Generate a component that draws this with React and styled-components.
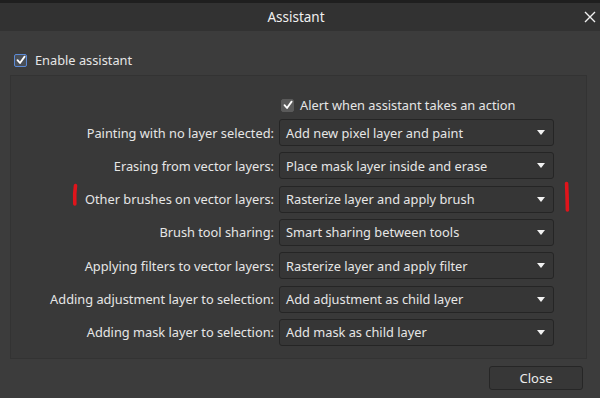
import React from 'react';
import styled, { createGlobalStyle } from 'styled-components';

const GlobalStyle = createGlobalStyle`
	html, body {
		margin: 0;
		padding: 0;
		background: #3c3c3c;
	}
	* {
		box-sizing: border-box;
	}
`;

const Window = styled.div`
	position: relative;
	width: 600px;
	height: 398px;
	background: #3c3c3c;
	display: flex;
	flex-direction: column;
	font-family: "Noto Sans", "Open Sans", sans-serif;
	font-size: 12.8px;
	color: #e6e6e6;
	overflow: hidden;
`;

const TitleBar = styled.div`
	height: 31px;
	border-top: 3px solid #1f1f1f;
	background: #323232;
	display: flex;
	align-items: center;
	justify-content: center;
	position: relative;
	padding-right: 8px;
	font-size: 13.5px;
	color: #f0f0f0;
`;

const CloseX = styled.button`
	position: absolute;
	right: 3px;
	top: 7px;
	width: 14px;
	height: 14px;
	padding: 0;
	border: none;
	background: none;
	display: flex;
	align-items: center;
	justify-content: center;
`;

const Body = styled.div`
	flex: 1;
	display: flex;
	flex-direction: column;
	padding: 22px 13px 0 10px;
`;

const CheckRow = styled.label`
	display: flex;
	align-items: center;
	gap: ${p => p.$gap || 6}px;
	height: 14px;
	margin-left: ${p => p.$indent || 0}px;
`;

const Box = styled.span`
	width: 13px;
	height: 13px;
	border-radius: 2px;
	background: ${p => (p.$focus ? '#4a4f57' : '#5a5a5a')};
	border: 1px solid ${p => (p.$focus ? '#5b8ad6' : '#5a5a5a')};
	display: flex;
	align-items: center;
	justify-content: center;
`;

const Panel = styled.div`
	margin-top: 8px;
	height: 284px;
	background: #393939;
	border: 1px solid #333333;
	padding-top: 22px;
	display: flex;
	flex-direction: column;
`;

const Grid = styled.div`
	display: grid;
	grid-template-columns: 263px 275px;
	column-gap: 5px;
	row-gap: 6.33px;
	margin-top: 7px;
`;

const Label = styled.div`
	text-align: right;
	align-self: center;
	white-space: nowrap;
`;

const Select = styled.div`
	height: 27px;
	border: 1px solid #252525;
	border-radius: 3px;
	background: #363636;
	display: flex;
	align-items: center;
	justify-content: space-between;
	padding: 0 6px 0 6px;
	white-space: nowrap;
`;

const Arrow = styled.span`
	width: 0;
	height: 0;
	border-left: 4.5px solid transparent;
	border-right: 4.5px solid transparent;
	border-top: 5px solid #f2f2f2;
	margin-right: 2px;
`;

const Footer = styled.div`
	display: flex;
	justify-content: flex-end;
	padding: 7px 4px 0 0;
`;

const Button = styled.button`
	width: 94px;
	height: 24px;
	background: #373737;
	border: 1px solid #262626;
	border-radius: 3px;
	color: #ececec;
	font-family: inherit;
	font-size: 13px;
	padding: 0;
`;

const Mark = styled.svg`
	position: absolute;
	left: ${p => p.$x}px;
	top: ${p => p.$y}px;
`;

const rows = [
	['Painting with no layer selected:', 'Add new pixel layer and paint'],
	['Erasing from vector layers:', 'Place mask layer inside and erase'],
	['Other brushes on vector layers:', 'Rasterize layer and apply brush'],
	['Brush tool sharing:', 'Smart sharing between tools'],
	['Applying filters to vector layers:', 'Rasterize layer and apply filter'],
	['Adding adjustment layer to selection:', 'Add adjustment as child layer'],
	['Adding mask layer to selection:', 'Add mask as child layer'],
];

const Check = () => (
	<svg width="10" height="10" viewBox="0 0 10 10">
		<path d="M1.5 5.2 L4 8 L8.6 1.6" fill="none" stroke="#ffffff" strokeWidth="1.8" strokeLinecap="round" strokeLinejoin="round" />
	</svg>
);

export default function App() {
	return (
		<>
			<GlobalStyle />
			<Window>
				<TitleBar>
					Assistant
					<CloseX>
						<svg width="12" height="12" viewBox="0 0 12 12">
							<path d="M1 1 L11 11 M11 1 L1 11" stroke="#f0f0f0" strokeWidth="1.4" />
						</svg>
					</CloseX>
				</TitleBar>
				<Body>
					<CheckRow $indent={4} $gap={8}>
						<Box $focus><Check /></Box>
						Enable assistant
					</CheckRow>
					<Panel>
						<CheckRow $indent={270}>
							<Box><Check /></Box>
							Alert when assistant takes an action
						</CheckRow>
						<Grid>
							{rows.map(([label, value]) => (
								<React.Fragment key={label}>
									<Label>{label}</Label>
									<Select>
										{value}
										<Arrow />
									</Select>
								</React.Fragment>
							))}
						</Grid>
					</Panel>
					<Footer>
						<Button>Close</Button>
					</Footer>
				</Body>
				<Mark $x={71} $y={183} width="8" height="24" viewBox="0 0 8 24">
					<path d="M4.5 2.5 Q3.2 11 3.8 21" fill="none" stroke="#e0141b" strokeWidth="3.6" strokeLinecap="round" />
				</Mark>
				<Mark $x={563} $y={181} width="8" height="32" viewBox="0 0 8 32">
					<path d="M3.6 2.5 Q4.2 16 4.4 29" fill="none" stroke="#e0141b" strokeWidth="3.6" strokeLinecap="round" />
				</Mark>
			</Window>
		</>
	);
}
